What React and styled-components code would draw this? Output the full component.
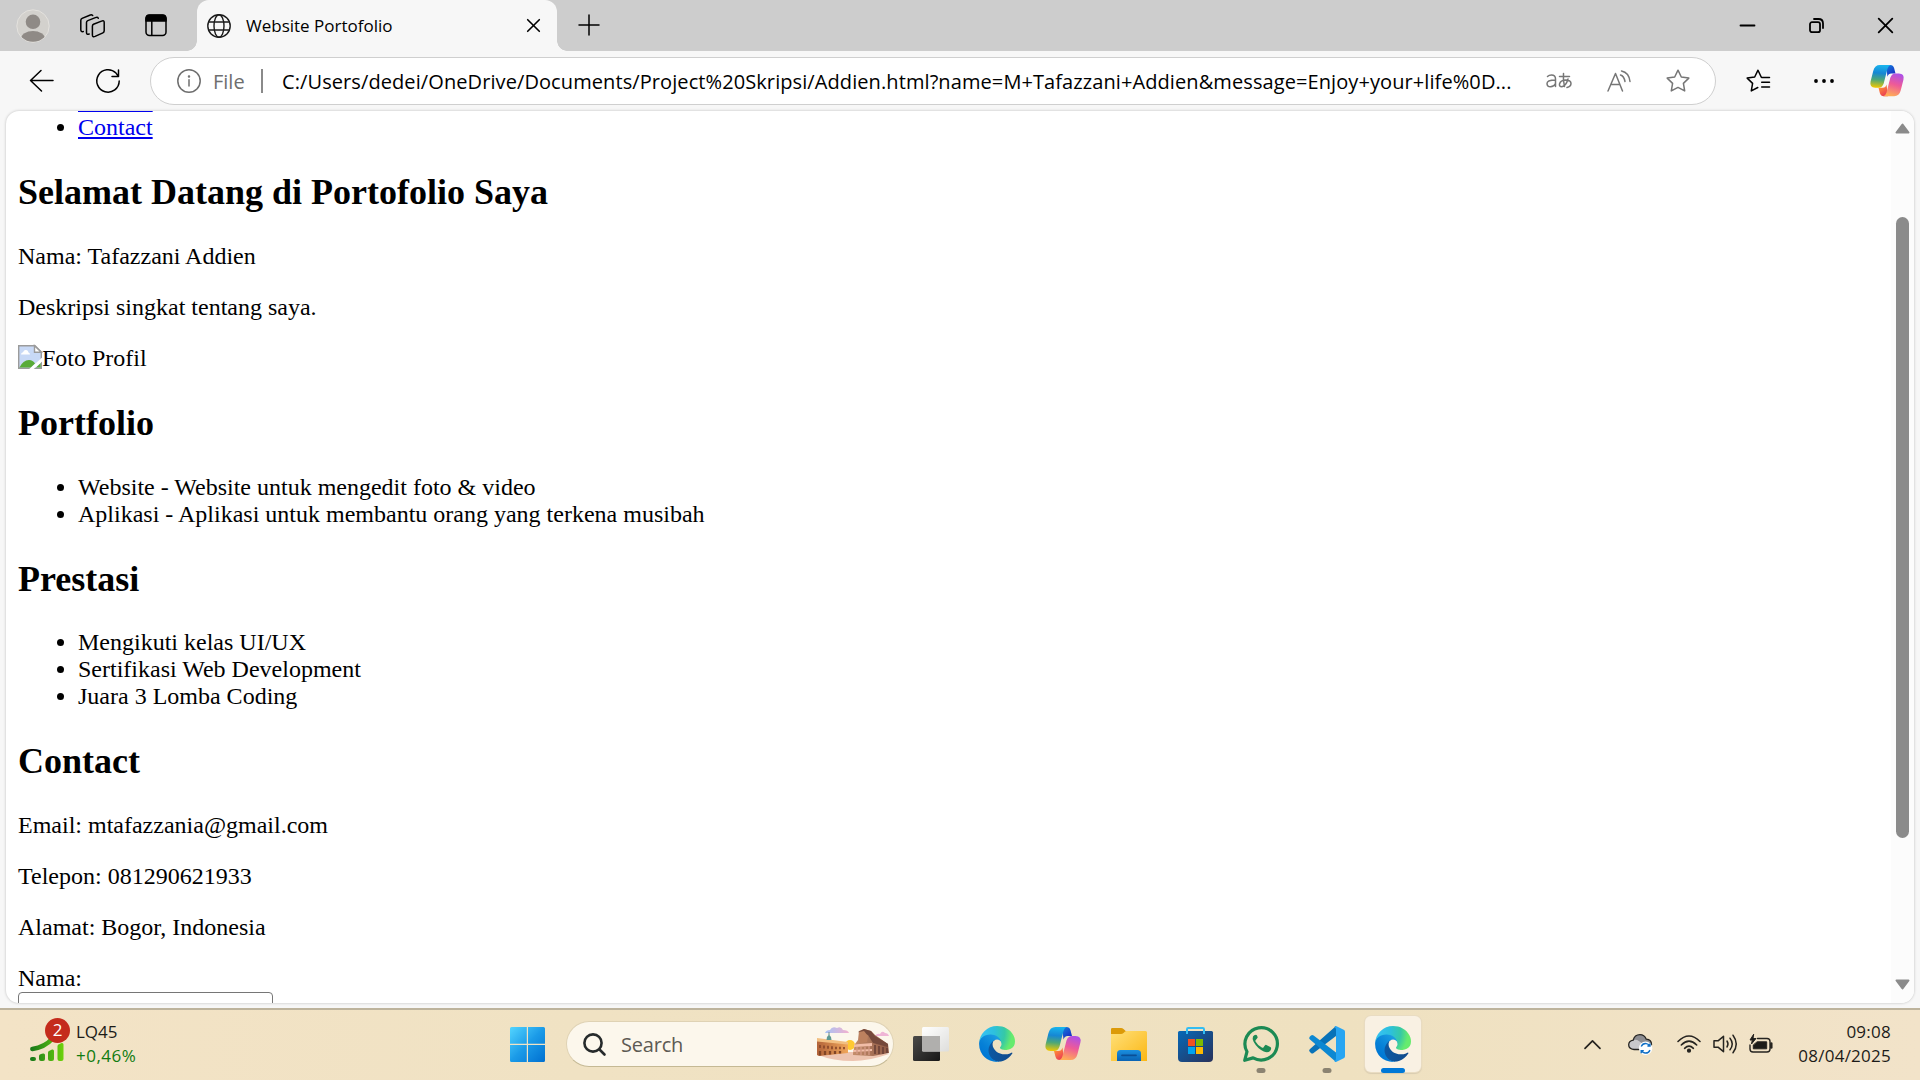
import React from "react";
import styled, { createGlobalStyle } from "styled-components";

const Global = createGlobalStyle`
  html, body { margin: 0; padding: 0; overflow: hidden; background: #f7f7f7; }
  * { box-sizing: border-box; }
  svg { display: block; flex: none; overflow: visible; }
`;

const UI = `"Open Sans", "Noto Sans", sans-serif`;

const Screen = styled.div`
  width: 1920px;
  height: 1080px;
  display: flex;
  flex-direction: column;
  overflow: hidden;
  background: #f7f7f7;
  font-family: ${UI};
  color: #000;
`;

/* ---------- title bar ---------- */
const TitleBar = styled.header`
  height: 51px;
  flex: none;
  display: flex;
  align-items: stretch;
  background: #cdcdcd;
`;

const TitleTools = styled.div`
  width: 197px;
  display: flex;
  align-items: center;
  padding-left: 16px;
`;

const Slot = styled.span`
  display: flex;
  margin-left: ${(p) => p.$gap || 0}px;
`;

const Tab = styled.div`
  position: relative;
  width: 360px;
  display: flex;
  align-items: center;
  padding: 0 17px 0 10px;
  background: #f7f7f7;
  border-radius: 12px 12px 0 0;
  &::before, &::after {
    content: "";
    position: absolute;
    bottom: 0;
    width: 10px;
    height: 10px;
  }
  &::before { left: -10px; background: radial-gradient(circle at 0 0, transparent 9.5px, #f7f7f7 10px); }
  &::after { right: -10px; background: radial-gradient(circle at 100% 0, transparent 9.5px, #f7f7f7 10px); }
`;

const TabTitle = styled.span`
  flex: 1;
  margin-left: 15px;
  font-size: 17px;
  line-height: 24px;
  white-space: nowrap;
`;

const NewTab = styled.span`
  display: flex;
  align-items: center;
  margin-left: 21px;
  padding-bottom: 2px;
`;

const WindowButtons = styled.div`
  display: flex;
  align-items: center;
  gap: 54px;
  margin-left: auto;
  padding-right: 27px;
`;

/* ---------- toolbar ---------- */
const Toolbar = styled.div`
  height: 60px;
  flex: none;
  display: flex;
  align-items: center;
  padding-left: 29px;
`;

const AddressBar = styled.div`
  width: 1566px;
  height: 48px;
  margin-left: 30px;
  display: flex;
  align-items: center;
  padding: 0 23px 0 26px;
  background: #fff;
  border: 1.5px solid #cfcfcf;
  border-radius: 24px;
`;

const Scheme = styled.span`
  width: 48px;
  margin-left: 12px;
  font-size: 20px;
  color: #6e6e6e;
`;

const Divider = styled.span`
  width: 2px;
  height: 24px;
  background: #8a8a8a;
`;

const Url = styled.span`
  width: 1264px;
  margin-left: 19px;
  font-size: 20px;
  letter-spacing: 0.09px;
  white-space: nowrap;
`;

/* ---------- web page ---------- */
const PageFrame = styled.main`
  height: 892px;
  flex: none;
  margin: 0 6px;
  display: flex;
  background: #fff;
  border-radius: 13px;
  overflow: hidden;
  box-shadow: 0 0 3px rgba(0, 0, 0, 0.24);
`;

const Document = styled.article`
  flex: 1;
  padding: 0 12px;
  font-family: "Liberation Serif", "Times New Roman", serif;
  font-size: 24px;
  line-height: 27px;
`;

const Heading = styled.h2`
  margin: 31px 0 29px;
  font-size: 36px;
  line-height: 41.5px;
  font-weight: 700;
`;

const Paragraph = styled.p`
  margin: 24px 0;
`;

const List = styled.ul`
  margin: 0;
  padding-left: 60px;
`;

const NavList = styled(List)`
  margin-top: -24px;
`;

const Link = styled.a`
  color: #0000ee;
  text-decoration: underline 2px;
  text-underline-offset: 2px;
`;

const Picture = styled.div`
  display: flex;
  height: 27.5px;
  svg { margin-top: 0.5px; }
`;

const Field = styled.div`
  width: 255px;
  height: 32px;
  border: 1.5px solid #767676;
  border-radius: 4px;
`;

const ScrollBar = styled.div`
  width: 23px;
  display: flex;
  flex-direction: column;
  align-items: center;
  background: #fcfcfc;
  padding: 12px 0 13px;
`;

const Thumb = styled.div`
  width: 13px;
  height: 621px;
  margin-top: 83px;
  margin-bottom: auto;
  border-radius: 7px;
  background: #8b8b8b;
`;

/* ---------- taskbar ---------- */
const Taskbar = styled.footer`
  height: 72px;
  flex: none;
  margin-top: 5px;
  display: flex;
  align-items: center;
  padding-bottom: 2px;
  border-top: 2px solid #bdb39c;
  background: linear-gradient(90deg, #f3e3c6 0%, #f0e2c3 30%, #efe1c0 70%, #f2e3c9 100%);
`;

const Widget = styled.div`
  width: 480px;
  display: flex;
  align-items: center;
  padding-left: 30px;
`;

const WidgetIcon = styled.div`
  position: relative;
  width: 34px;
  height: 42px;
  margin-bottom: 4px;
`;

const Badge = styled.span`
  position: absolute;
  left: 15px;
  top: -3px;
  width: 25px;
  height: 25px;
  border-radius: 50%;
  background: #c42b1c;
  color: #fff;
  font-size: 17px;
  line-height: 24px;
  text-align: center;
`;

const Lines = styled.div`
  display: flex;
  flex-direction: column;
  margin-left: 12px;
  font-size: 17px;
  line-height: 24px;
  letter-spacing: ${(p) => p.$track || 0}px;
  color: #1c1b18;
  text-align: ${(p) => p.$align || "left"};
`;

const Gain = styled.span`
  color: #107c10;
  letter-spacing: 0.5px;
`;

const StartSlot = styled.span`
  margin-left: 30px;
`;

const SearchBox = styled.div`
  width: 328px;
  height: 46px;
  margin-left: 21px;
  display: flex;
  align-items: center;
  padding: 0 3px 0 16px;
  background: #fcf7ec;
  border: 1.5px solid #dfd2b4;
  border-bottom-color: #c5b994;
  border-radius: 23px;
`;

const SearchLabel = styled.span`
  flex: 1;
  margin-left: 15px;
  font-size: 20px;
  letter-spacing: -0.2px;
  color: #5d5a53;
`;

const Apps = styled.nav`
  display: flex;
  align-items: center;
  margin-left: 4px;
`;

const AppButton = styled.span`
  position: relative;
  width: 56px;
  height: 56px;
  margin: 0 5px;
  display: flex;
  align-items: center;
  justify-content: center;
  border-radius: 6px;
  background: ${(p) => (p.$active ? "#f9f1e3" : "transparent")};
  box-shadow: ${(p) => (p.$active ? "0 0 0 1px #e9dcc2, 0 1px 1px 1px #d9ccb0" : "none")};
  &::after {
    content: "";
    display: ${(p) => (p.$active || p.$running ? "block" : "none")};
    position: absolute;
    bottom: -1px;
    left: 50%;
    width: ${(p) => (p.$active ? 24 : 9)}px;
    height: 5px;
    transform: translateX(-50%);
    border-radius: 3px;
    background: ${(p) => (p.$active ? "#0078d7" : "#8b8371")};
  }
`;

const Tray = styled.div`
  margin-left: auto;
  display: flex;
  align-items: center;
  padding-right: 29px;
`;

/* ---------- drawings ---------- */
const Svg = ({ w, h = w, box, sw = 1.5, c = "#000", children }) => (
  <svg width={w} height={h} viewBox={box || `0 0 ${w} ${h}`} fill="none" stroke={c} strokeWidth={sw} strokeLinecap="round" strokeLinejoin="round">
    {children}
  </svg>
);

const Avatar = () => (
  <svg width="34" height="34" viewBox="0 0 34 34">
    <clipPath id="av"><circle cx="17" cy="17" r="15.8" /></clipPath>
    <circle cx="17" cy="17" r="16.2" fill="#d3d1cd" stroke="#e4e2de" />
    <circle cx="17" cy="12.8" r="7.3" fill="#8f8a86" />
    <ellipse cx="17" cy="30" rx="12" ry="8" fill="#8f8a86" clipPath="url(#av)" />
  </svg>
);

const Workspaces = () => (
  <Svg w={25} h={24}>
    <path d="m13.500 10.300 8-3.200q2.700-1 2.700 1.300v8.400q0 1.500-1.300 2.100l-7.800 3.500q-2.700 1.100-2.700-1.400V12.200q0-1.400 1.100-1.900Z" />
    <path d="M9.200 20q-2.700 1-2.700-1.500V8.600q0-1.400 1.300-2l7.600-3q2.200-.9 2.900.6" />
    <path d="M3.300 17.600Q.8 18 .8 15.800V6.400q0-1.400 1.300-2l7.600-3.200q1.900-.8 3 .3" />
  </Svg>
);

const TabActions = () => (
  <Svg w={22} h={23}>
    <rect x="1" y="1.2" width="20" height="20.3" rx="3.5" />
    <path d="M1 7V4.5Q1 1 4.5 1h13Q21 1 21 4.5V7Z" fill="#000" />
    <path d="M6.800 7v14" />
  </Svg>
);

const Globe = () => (
  <Svg w={24} sw={1.4} c="#1b1b1b">
    <circle cx="12" cy="12" r="11.2" />
    <ellipse cx="12" cy="12" rx="5" ry="11.2" />
    <path d="M1.8 8h20.4M1.8 16h20.4" />
  </Svg>
);

const Cross = ({ s, sw = 1.6 }) => <Svg w={s} sw={sw}><path d={`M.7.7 ${s - 0.7} ${s - 0.7}M${s - 0.7}.7.7 ${s - 0.7}`} /></Svg>;

const Restore = () => (
  <Svg w={15} sw={1.8}>
    <rect x="1" y="4.2" width="10" height="10" rx="2" />
    <path d="M5 1h4.500Q14 1 14 5.500V10" />
  </Svg>
);

const starPath = "M12 1.200 15.300 8l7.500 1.100-5.400 5.300 1.300 7.500L12 18.400l-6.700 3.500 1.300-7.500L1.200 9.100 8.700 8Z";

const Sparkline = () => (
  <svg width="34" height="42" viewBox="0 0 34 42">
    <defs><linearGradient id="gr" x1="0" x2="34" y1="0" y2="0" gradientUnits="userSpaceOnUse"><stop stopColor="#16761a" /><stop offset="1" stopColor="#6fd30c" /></linearGradient></defs>
    <path d="M2.400 28Q15 26 22 18" stroke="url(#gr)" strokeWidth="4.600" strokeLinecap="round" fill="none" />
    <g fill="url(#gr)">
      <rect x="0" y="36" width="6" height="4" rx="2" />
      <path d="M9 35q0-1.500 2-2l2-.5q2-.4 2 1.500v4q0 2-2 2h-2q-2 0-2-2Z" />
      <path d="M18 31.500q0-1.500 2-2l2-1q2-.5 2 1.500v8q0 2-2 2h-2q-2 0-2-2Z" />
      <path d="M27.500 25q0-1.500 2-2l2-1q2-.5 2 1.500V38q0 2-2 2h-2q-2 0-2-2Z" />
    </g>
  </svg>
);

const Windows = () => (
  <svg width="35" height="35" viewBox="0 0 35 35">
    <defs><linearGradient id="wn" x1="0" y1="0" x2="35" y2="35" gradientUnits="userSpaceOnUse"><stop stopColor="#53d5ff" /><stop offset=".5" stopColor="#1b9be8" /><stop offset="1" stopColor="#006fd0" /></linearGradient></defs>
    <path fill="url(#wn)" d="M1.500 0H16.800V16.800H0V1.500Q0 0 1.500 0ZM18 0h15.500Q35 0 35 1.500V16.800H18ZM0 18h16.800v17H1.500Q0 35 0 33.500ZM18 18h17v15.500q0 1.500-1.500 1.500H18Z" />
  </svg>
);

const City = () => (
  <svg width="73" height="36" viewBox="0 0 73 36">
    <defs>
      <linearGradient id="ct" x1="0" x2="1"><stop stopColor="#b3643a" /><stop offset="1" stopColor="#f0a65a" /></linearGradient>
      <linearGradient id="cr" x1="0" x2="1"><stop stopColor="#c58e6b" /><stop offset="1" stopColor="#8d5844" /></linearGradient>
      <linearGradient id="cl" x1="0" x2="1"><stop stopColor="#a6c3f5" /><stop offset="1" stopColor="#f3b1cf" /></linearGradient>
    </defs>
    <path d="M8 7q1-3 5-3 2-4 7-2 4-2 6 2 5 0 6 3Z" fill="url(#cl)" />
    <path d="M58 10q2-3 5-2 2-4 5-1 3 0 4 3Z" fill="#efb5d6" />
    <path d="M1 29Q20 26 34 26t38 2Q52 35 36 35 16 35 1 29Z" fill="#edc4b0" />
    <circle cx="33" cy="19" r="5" fill="#ffc933" />
    <path d="M0 13 31 17.500V27L2 30 0 29Z" fill="url(#ct)" />
    <path d="m0 12 31 4v2.500L0 15.500Z" fill="#f2bf81" />
    <path d="M9.500 14q0-3.600 2.500-5.500Q14.500 10.400 14.500 14Z" fill="#5f9a94" />
    <path d="M12 6v3" stroke="#6e8d88" />
    <path d="M3 19v3m4-2.600v3m4-2.600v3m4-2.500v3m4-2.600v2.600m4-2.500v2.500m4-2.300v2.300" stroke="#89472a" strokeWidth="1.700" />
    <path d="M3 25v4.500m5-4.500v4m5-4v3.500m5-3.500v3m5-3v2.500" stroke="#814526" strokeWidth="2.300" />
    <path d="M36 27 38 18 41 14 42 5 47 3 54 5 58 9 71 18 72 27 56 30 36 29Z" fill="url(#cr)" />
    <path d="m47 3 7 2 4 5 13 8v3L56 17 51 9 41 6Z" fill="#75493b" />
    <path d="m42 6 5-1 4 5-1 6-8 1Z" fill="#bd815f" />
    <path d="M37 18.500 55 17v3l-18 1ZM36 24l19-1v2l-19 1Z" fill="#f1bda8" />
    <path d="M40 21v7m4-7v8m4-8v8m4-9v9" stroke="#d39a85" strokeWidth="1.400" />
    <path d="M58 19v9m4-8v8m4-7v7m4-6v5" stroke="#633b33" strokeWidth="1.400" />
  </svg>
);

const TaskView = () => (
  <svg width="36" height="34" viewBox="0 0 36 34">
    <defs><linearGradient id="tv" x1="0" y1="0" x2="1" y2="1"><stop stopColor="#4b4a48" /><stop offset="1" stopColor="#171717" /></linearGradient><linearGradient id="tw" x1="0" y1="0" x2="1" y2="1"><stop stopColor="#fff" /><stop offset="1" stopColor="#dededc" /></linearGradient></defs>
    <rect x="0" y="9" width="27" height="25" rx="1.500" fill="url(#tv)" />
    <rect x="9" y="0" width="27" height="24.500" rx="1.500" fill="url(#tw)" />
    <path d="M9 9h18v15.500H10.500Q9 24.500 9 23Z" fill="#b0afad" />
  </svg>
);

const Edge = () => (
  <svg width="36" height="36" viewBox="0 0 256 256">
    <defs>
      <linearGradient id="e1" x1="58" y1="177" x2="237" y2="177" gradientUnits="userSpaceOnUse"><stop stopColor="#0c59a4" /><stop offset="1" stopColor="#114a8b" /></linearGradient>
      <linearGradient id="e2" x1="150" y1="95" x2="44" y2="213" gradientUnits="userSpaceOnUse"><stop stopColor="#1b9de2" /><stop offset=".16" stopColor="#1595df" /><stop offset=".67" stopColor="#0680d7" /><stop offset="1" stopColor="#0078d4" /></linearGradient>
      <radialGradient id="e3" cx="26" cy="45" r="210" gradientUnits="userSpaceOnUse"><stop stopColor="#35c1f1" /><stop offset=".4" stopColor="#2dc0dd" /><stop offset=".75" stopColor="#36c9a5" /><stop offset="1" stopColor="#66eb6e" /></radialGradient>
    </defs>
    <path fill="url(#e1)" d="M231 190.500c-3.400 1.800-6.900 3.400-10.500 4.700a101.500 101.500 0 0 1-35.800 6.400c-47.200 0-88.300-32.500-88.300-74.100a31.500 31.500 0 0 1 16.400-27.300c-42.700 1.800-53.700 46.300-53.700 72.400 0 73.800 68 81.300 82.700 81.300 7.900 0 19.800-2.300 27-4.600l1.300-.4a128.300 128.300 0 0 0 66.600-52.800 4 4 0 0 0-5.700-5.600Z" />
    <path fill="url(#e2)" d="M105.700 241.400a79.200 79.200 0 0 1-22.700-21.300 80.700 80.700 0 0 1 29.900-120c3.100-1.500 8.500-4.100 15.600-4a32.400 32.400 0 0 1 25.700 13 31.900 31.900 0 0 1 6.300 18.700c0-.2 24.500-79.600-80-79.600C36.600 48.200.5 89.900.5 126.500a130.200 130.200 0 0 0 12.100 56 128 128 0 0 0 156.400 67 75.500 75.500 0 0 1-63.200-8Z" />
    <path fill="url(#e3)" d="M152.300 148.900c-.9 1-3.400 2.500-3.400 5.600 0 2.600 1.700 5.200 4.800 7.300 14.400 10.100 41.700 8.700 41.800 8.700a59.600 59.600 0 0 0 30.300-8.300A61.400 61.400 0 0 0 256 109.400c.3-22.400-8-37.300-11.300-43.900C223.500 23.900 177.700 0 128 0A128 128 0 0 0 0 126.200c.5-36.500 36.800-66 80-66 3.500 0 23.500.3 42 10 16.300 8.600 24.900 19 30.800 29.200 6.200 10.700 7.300 24.100 7.300 29.500s-2.700 13.300-7.800 19.900Z" />
  </svg>
);

const Copilot = ({ w = 36, id }) => (
  <svg width={w} height={w * 0.92} viewBox="0 0 36 33">
    <defs>
      <linearGradient id={id + "a"} x1="10" y1="0" x2="8" y2="24" gradientUnits="userSpaceOnUse"><stop stopColor="#19b4ed" /><stop offset=".35" stopColor="#1687d4" /><stop offset=".65" stopColor="#4da777" /><stop offset="1" stopColor="#f2c800" /></linearGradient>
      <linearGradient id={id + "b"} x1="30" y1="8" x2="22" y2="33" gradientUnits="userSpaceOnUse"><stop stopColor="#a74fef" /><stop offset=".5" stopColor="#ee5a98" /><stop offset="1" stopColor="#ffae56" /></linearGradient>
      <linearGradient id={id + "c"} x1="18" y1="0" x2="25" y2="9" gradientUnits="userSpaceOnUse"><stop stopColor="#147bdd" /><stop offset="1" stopColor="#1836c5" /></linearGradient>
      <linearGradient id={id + "d"} x1="10" y1="24" x2="16" y2="33" gradientUnits="userSpaceOnUse"><stop stopColor="#ff8b38" /><stop offset="1" stopColor="#e93758" /></linearGradient>
    </defs>
    <path d="M17 0h4.500q3 0 4 3.200L27 9h-4.500q-3 0-4 3.500Z" fill={`url(#${id}c)`} />
    <path d="M19 33h-4.500q-3 0-4-3.200L9 24h4.500q3 0 4-3.500Z" fill={`url(#${id}d)`} />
    <path d="M10.500 0H22q-2.500.5-3.500 4l-4 15.500Q13 24 9 24H5.500Q-.8 24 .6 17.500L3.500 6Q5 0 10.500 0Z" fill={`url(#${id}a)`} />
    <path d="M25.500 33H14q2.500-.5 3.500-4l4-15.500Q23 9 27 9h3.500q6.300 0 4.900 6.500L32.500 27Q31 33 25.500 33Z" fill={`url(#${id}b)`} />
  </svg>
);

const Explorer = () => (
  <svg width="36" height="33" viewBox="0 0 36 33">
    <defs><linearGradient id="fx" x1="0" y1="0" x2="1" y2="1"><stop stopColor="#ffe07a" /><stop offset="1" stopColor="#fbb714" /></linearGradient><linearGradient id="fb" x1="0" y1="0" x2="0" y2="1"><stop stopColor="#1a8fdf" /><stop offset="1" stopColor="#0a63b4" /></linearGradient></defs>
    <path d="M0 1.200Q0 0 1.300 0H10q1.500 0 2.500 1l2.700 2.500H20V8H0Z" fill="#dc9a08" />
    <path d="M0 6h10q1.500 0 2.500-1l1.300-1.200Q14.500 3 16 3h18.500Q36 3 36 4.500V33H0Z" fill="url(#fx)" />
    <path d="M6 33v-7.500Q6 22 9.500 22h17q3.500 0 3.500 3.500V33Z" fill="url(#fb)" />
    <path d="M11 27.300h14" stroke="#0a4f96" strokeWidth="1.700" strokeLinecap="round" />
  </svg>
);

const Store = () => (
  <svg width="35" height="35" viewBox="0 0 35 35">
    <defs><linearGradient id="st" x1="0" y1="0" x2="1" y2="1"><stop stopColor="#0669b8" /><stop offset="1" stopColor="#29315a" /></linearGradient></defs>
    <path d="M1.500 4h32Q35 4 35 5.500V31q0 4-4 4H4q-4 0-4-4V5.500Q0 4 1.500 4Z" fill="url(#st)" />
    <path d="M9 7V2.300Q9 1 10.300 1h14.400Q26 1 26 2.300V7" fill="none" stroke="#33bdf2" strokeWidth="2" />
    <path d="M10 12h7v7h-7Z" fill="#f25022" /><path d="M18 12h7v7h-7Z" fill="#7fba00" /><path d="M10 20h7v7h-7Z" fill="#00a4ef" /><path d="M18 20h7v7h-7Z" fill="#ffb900" />
  </svg>
);

const WhatsApp = () => (
  <svg width="36" height="36" viewBox="0 0 36 36">
    <path d="m1.700 34.300 2.300-8.600a16.200 16.200 0 1 1 6.100 6.200Z" fill="none" stroke="#1c8a54" strokeWidth="3.200" strokeLinejoin="round" />
    <path d="M13.100 10.200q-.5-1-1.200-1-2 0-2.900 1.900-1 2.400.6 5.200 3.600 6.700 10.200 9.700 4 1.500 6.300-.6 1.200-1.200 1-2.900 0-.7-.8-1.100l-4-2q-.8-.3-1.300.3L19.400 22q-.4.600-1.200.2-4.400-2-6.700-6.200-.4-.7.100-1.200l1.800-2.200q.4-.6.200-1.200Z" transform="translate(1 -.5)" fill="#1c8a54" />
  </svg>
);

const Code = () => (
  <svg width="36" height="36" viewBox="0 0 36 36">
    <path d="M27 0 1 23q-1.600 1.300-.3 2.700L2 27q1.200 1.100 2.600 0L27 10Z" fill="#0872b8" />
    <path d="M1 13.500q-1.600-1.300-.3-2.800L2 9.500q1.200-1.100 2.600 0L27 26.500V36Z" fill="#0c88d2" />
    <path d="M25.500 35.700q1 .4 2 0l7.200-3.500q1.300-.6 1.300-2V5.800q0-1.400-1.300-2L27.500.3q-1-.5-2 .1L27 3v30Z" fill="#27a5f2" />
  </svg>
);

const Cloud = () => (
  <svg width="25" height="21" viewBox="0 0 25 21">
    <path d="M6 15.500q-5.300-.4-5.300-4.700Q.8 7 5.200 6.200 6.500.7 12 .7q4.300 0 6.300 4.500 5.200.4 5.200 5.300 0 5-5 5Z" fill="#8e8e92" />
    <path d="M6 15.500q-5.300-.4-5.300-4.700Q.8 7 5.200 6.200q3-1 6 1l10 7q-1 1.300-2.700 1.300Z" fill="#c9c9cc" />
    <path d="M6 15.500q-5.300-.4-5.300-4.700Q.8 7 5.200 6.200 6.500.7 12 .7q4.300 0 6.300 4.500 5.200.4 5.200 5.300 0 5-5 5Z" fill="none" stroke="#262522" strokeWidth="1.300" />
    <circle cx="17.600" cy="14.300" r="6.700" fill="#fff" />
    <path d="M13.200 12.500q1.500-3.300 5-2.900 2 .2 3.500 2m.3-2.200v2.600h-2.600M22 16.100q-1.500 3.300-5 2.900-2-.2-3.500-2m-.3 2.200v-2.600h2.600" fill="none" stroke="#0f6fc6" strokeWidth="1.400" />
  </svg>
);

const BrokenImage = () => (
  <svg width="24" height="24" viewBox="0 0 24 24">
    <path d="M.7.7H17l6.300 6.300v16.300H.7Z" fill="#c8d9f6" stroke="#9b9b9b" strokeWidth="1.400" />
    <path d="M16.500.7V7.200h6.800Z" fill="#fff" stroke="#9b9b9b" strokeWidth="1.400" />
    <path d="M3 9.500Q3 7.400 5 7.200 6 4.500 8.200 5q2 .3 2.300 2.400 1.500.2 1.500 2.100Z" fill="#fff" />
    <path d="M1.400 22.600Q5 15 11 15q4 0 6 3.600l-4 4Z" fill="#58ab38" />
    <path d="M18 22.600 22.600 18v4.600Z" fill="#58ab38" />
    <path d="M11 24.200 24.200 12.500v4L15.500 24.200Z" fill="#fff" />
  </svg>
);

export default function App() {
  return (
    <Screen>
      <Global />
      <TitleBar>
        <TitleTools>
          <Slot><Avatar /></Slot>
          <Slot $gap={30}><Workspaces /></Slot>
          <Slot $gap={40}><TabActions /></Slot>
        </TitleTools>
        <Tab>
          <Globe />
          <TabTitle>Website Portofolio</TabTitle>
          <Cross s={13} />
        </Tab>
        <NewTab><Svg w={22}><path d="M1 11h20M11 1v20" /></Svg></NewTab>
        <WindowButtons>
          <Svg w={15} sw={1.8}><path d="M.5 7.500h14" /></Svg>
          <Restore />
          <Cross s={15} sw={1.8} />
        </WindowButtons>
      </TitleBar>

      <Toolbar>
        <Svg w={25} h={22}><path d="M12 .500 1.500 10.500l11 10.500M1.500 10.500H24" /></Svg>
        <Slot $gap={42}><Svg w={24}><path d="M23.200 12A11.200 11.200 0 1 1 20 4.100L22.200 7M22.500 1v6.500H16" /></Svg></Slot>
        <AddressBar>
          <Svg w={24} c="#6e6e6e"><circle cx="12" cy="12" r="11.2" /><path d="M12 10.800v6.200" /><circle cx="12" cy="7.4" r=".5" fill="#6e6e6e" /></Svg>
          <Scheme>File</Scheme>
          <Divider />
          <Url>C:/Users/dedei/OneDrive/Documents/Project%20Skripsi/Addien.html?name=M+Tafazzani+Addien&amp;message=Enjoy+your+life%0D...</Url>
          <Svg w={26} h={18} c="#767676" sw={1.5}>
            <path d="M1.500 4.500Q3 3 5.500 3q4 0 4 4v7.500M9.500 8Q1 8 1 11.500q0 3.300 3.500 3.300 3.500 0 5-3.300" />
            <path d="M13.500 4.500h10M17.500 1.500q-.6 7 1 13M22 7q-2 7-6.200 7.800-2.800 0-2.300-2.800Q14.500 8 20 8q5 .2 5 3.600 0 3-4 3.900" />
          </Svg>
          <Slot $gap={35}><Svg w={24} h={22} c="#767676"><path d="M1 21 8.500 3.500 15.500 21M3.700 14.500h9.200M13.500 5q3.500 1 4.500 6.500M14.500 1q7.500 1.500 8.500 10.500" /></Svg></Slot>
          <Slot $gap={35}><Svg w={24} c="#767676"><path d={starPath} /></Svg></Slot>
        </AddressBar>
        <Slot $gap={30}>
          <Svg w={24}><path d="m15.700 8.500-.4-.3L12 1.200 8.700 8 1.200 9.100l5.400 5.300-1.300 7.500 6.500-3.400M15.700 8.500H23.500M15.700 13.200h7.800M15.700 18h7.800" /></Svg>
        </Slot>
        <Slot $gap={44}><Svg w={20} h={4}><g fill="#000" stroke="none"><circle cx="2" cy="2" r="1.9" /><circle cx="10" cy="2" r="1.9" /><circle cx="18" cy="2" r="1.9" /></g></Svg></Slot>
        <Slot $gap={36}><Copilot w={34} id="cpt" /></Slot>
      </Toolbar>

      <PageFrame>
        <Document>
          <NavList>
            <li><Link>Prestasi</Link></li>
            <li><Link>Contact</Link></li>
          </NavList>
          <Heading>Selamat Datang di Portofolio Saya</Heading>
          <Paragraph>Nama: Tafazzani Addien</Paragraph>
          <Paragraph>Deskripsi singkat tentang saya.</Paragraph>
          <Picture><BrokenImage />Foto Profil</Picture>
          <Heading>Portfolio</Heading>
          <List>
            <li>Website - Website untuk mengedit foto &amp; video</li>
            <li>Aplikasi - Aplikasi untuk membantu orang yang terkena musibah</li>
          </List>
          <Heading>Prestasi</Heading>
          <List>
            <li>Mengikuti kelas UI/UX</li>
            <li>Sertifikasi Web Development</li>
            <li>Juara 3 Lomba Coding</li>
          </List>
          <Heading>Contact</Heading>
          <Paragraph>Email: mtafazzania@gmail.com</Paragraph>
          <Paragraph>Telepon: 081290621933</Paragraph>
          <Paragraph>Alamat: Bogor, Indonesia</Paragraph>
          <div>Nama:</div>
          <Field />
        </Document>
        <ScrollBar>
          <svg width="15" height="11"><path d="M7.500 1.500 13.500 9.500H1.500Z" fill="#8b8b8b" stroke="#8b8b8b" strokeWidth="2" strokeLinejoin="round" /></svg>
          <Thumb />
          <svg width="15" height="11"><path d="M7.500 9.500 13.500 1.500H1.500Z" fill="#8b8b8b" stroke="#8b8b8b" strokeWidth="2" strokeLinejoin="round" /></svg>
        </ScrollBar>
      </PageFrame>

      <Taskbar>
        <Widget>
          <WidgetIcon><Sparkline /><Badge>2</Badge></WidgetIcon>
          <Lines><span>LQ45</span><Gain>+0,46%</Gain></Lines>
        </Widget>
        <StartSlot><Windows /></StartSlot>
        <SearchBox>
          <Svg w={23} sw={2.6} c="#262a2b"><circle cx="10" cy="10" r="8.6" /><path d="m16.500 16.500 5 5" /></Svg>
          <SearchLabel>Search</SearchLabel>
          <City />
        </SearchBox>
        <Apps>
          <AppButton><TaskView /></AppButton>
          <AppButton><Edge /></AppButton>
          <AppButton><Copilot id="cpb" /></AppButton>
          <AppButton><Explorer /></AppButton>
          <AppButton><Store /></AppButton>
          <AppButton $running><WhatsApp /></AppButton>
          <AppButton $running><Code /></AppButton>
          <AppButton $active><Edge /></AppButton>
        </Apps>
        <Tray>
          <Svg w={17} h={9} c="#262420" sw={1.7}><path d="m1 8.300 7.500-7.400L16 8.300" /></Svg>
          <Slot $gap={27}><Cloud /></Slot>
          <Slot $gap={24}>
            <Svg w={24} h={18} c="#262420" sw={1.6}><path d="M1 6.500q11-11 22 0M4.300 10q7.700-7.600 15.400 0M7.600 13.300q4.400-4.200 8.800 0" /><circle cx="12" cy="15.7" r="1.3" fill="#262420" /></Svg>
          </Slot>
          <Slot $gap={12}>
            <Svg w={24} h={20} c="#262420" sw={1.5}><path d="M1 6.800h4l5.500-4.500v15.400L5 13.200H1ZM14 7q2 3 0 6M17 4.200q4.500 5.800 0 11.600M20 1.200q6.500 8.800 0 17.600" /></Svg>
          </Slot>
          <Slot $gap={12}>
            <Svg w={24} h={20} c="#262420" sw={1.4}><path d="M8.500 4.500H18q3 0 3 3v7.500q0 3-3 3H4q-3 0-3-3v-4" /><path d="M8.500 7.800h9.200v7H4.300v-3.500Z" fill="#1c1b18" strokeWidth="1" /><path d="M22.300 9.500v4" strokeWidth="2.500" /><path d="M4.500.5 1 6h2.300L2.500 10 7 4.500H4.300Z" fill="#1c1b18" strokeWidth="1" /></Svg>
          </Slot>
          <Slot $gap={13}><Lines $align="right" $track={0.25}><span>09:08</span><span>08/04/2025</span></Lines></Slot>
        </Tray>
      </Taskbar>
    </Screen>
  );
}
